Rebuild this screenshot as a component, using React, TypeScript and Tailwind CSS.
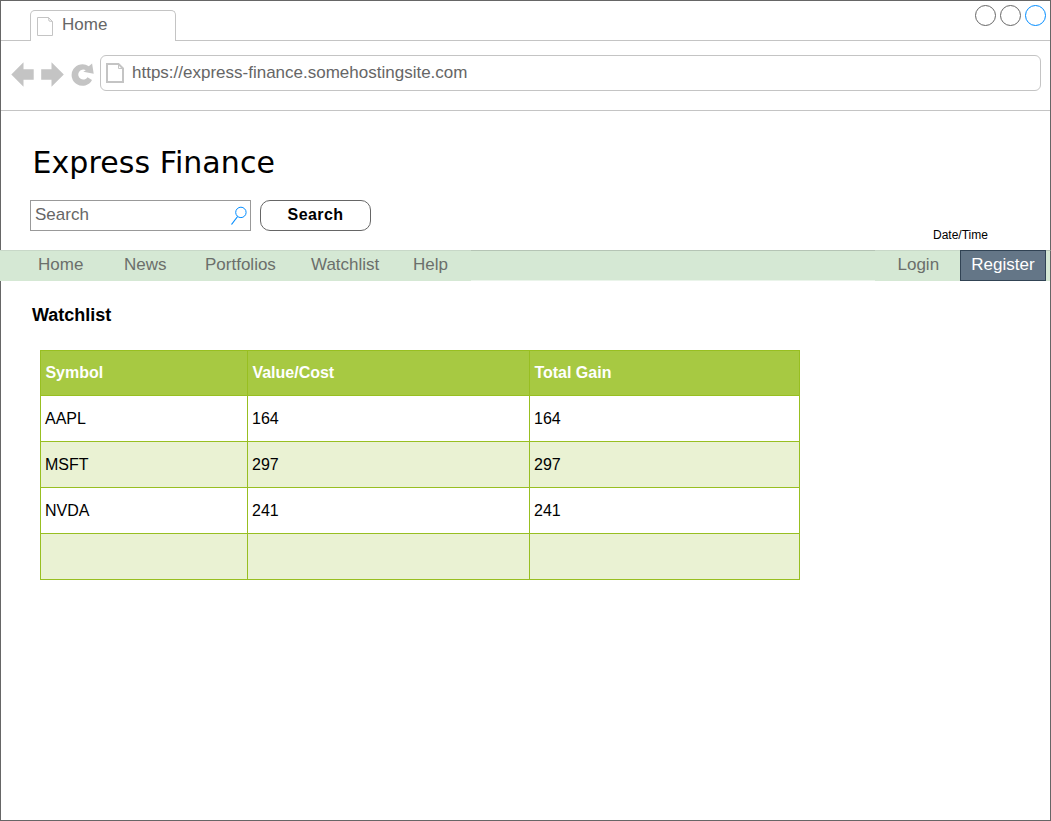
import React from "react";

const rows = [
  ["AAPL", "164", "164"],
  ["MSFT", "297", "297"],
  ["NVDA", "241", "241"],
  ["", "", ""],
];

function PageIcon({ className, thick }: { className: string; thick?: boolean }) {
  return thick ? (
    <svg className={className} viewBox="0 0 18 20" fill="none" stroke="#c4c4c4" strokeWidth="2">
      <path d="M1 1H12.5L17 5.5V19H1Z" />
      <path d="M12.5 1V5.5H17" strokeWidth="1" />
    </svg>
  ) : (
    <svg className={className} viewBox="0 0 16 19" fill="none" stroke="#c4c4c4">
      <path d="M.5 .5H11.5L15.5 4.5V18.5H.5Z" />
      <path d="M11.5 .5L12 4L15.5 4.5" />
    </svg>
  );
}

function TabBar() {
  return (
    <div className="flex h-10 items-end">
      <div className="h-px w-[29px] bg-[#c4c4c4]" />
      <div className="flex h-[31px] w-[146px] rounded-t-[5px] border border-b-0 border-[#c4c4c4] pl-[6px]">
        <PageIcon className="mt-[6px] h-[19px] w-4" />
        <span className="ml-[9px] mt-[4px] text-[17px] leading-5 text-[#666]">Home</span>
      </div>
      <div className="flex h-10 flex-1 justify-end gap-1 border-b border-[#c4c4c4] pr-1 pt-1">
        <div className="size-[21px] rounded-full border border-[#666]" />
        <div className="size-[21px] rounded-full border border-[#666]" />
        <div className="size-[21px] rounded-full border border-[#008cff]" />
      </div>
    </div>
  );
}

function AddressBar() {
  return (
    <div className="flex h-[70px] border-b border-[#c4c4c4] pt-[14px]">
      <svg className="ml-[10px] mt-[6px] h-[27px] w-[83px] shrink-0" viewBox="11 61 83 27" fill="#c4c4c4">
        <path d="M11.3 74.5L23.5 62.3V69.3H33.7V79.7H23.5V86.7Z" />
        <path d="M63.8 74.5L51.5 62.3V69.3H41.2V79.7H51.5V86.7Z" />
        <path d="M88.8 66.3L92.1 63.4L93.7 73.8L83.3 71.8L85.8 70.2A5 5 0 1 0 87.5 77.2L92 80A10.8 10.8 0 1 1 88.8 66.3Z" />
      </svg>
      <div className="ml-[6px] flex h-9 w-[941px] rounded-[6px] border border-[#c4c4c4] pl-[5px]">
        <PageIcon thick className="mt-[7px] h-5 w-[18px]" />
        <span className="ml-[8px] mt-[7px] text-[17px] leading-5 text-[#666]">
          https://express-finance.somehostingsite.com
        </span>
      </div>
    </div>
  );
}

function SearchRow() {
  return (
    <div className="mt-[18px] flex pl-[29px]">
      <div className="flex h-[31px] w-[221px] justify-between border border-[#999] pl-[4px] pr-[3px]">
        <span className="mt-[4px] text-[17px] leading-5 text-[#666]">Search</span>
        <svg className="mt-[5px] h-5 w-4" viewBox="0 0 16 20" fill="none" stroke="#008cff">
          <circle cx="9.9" cy="6.4" r="5.2" />
          <path d="M6.6 10.5L.5 18.5" strokeWidth="1.2" />
        </svg>
      </div>
      <button className="ml-[9px] flex h-[31px] w-[111px] justify-center rounded-[10px] border border-[#666] pt-[4px] text-[16px] font-bold leading-5 tracking-[0.4px] text-black">
        Search
      </button>
    </div>
  );
}

function Nav() {
  return (
    <nav className="-mx-px mt-[7px] flex h-[31px] text-[17px] leading-5 text-[#6b6f6b]">
      <div className="flex w-[471px] border-t border-[#c8d8c8] bg-[#d5e8d4] pl-[38px] pt-[4px]">
        <span className="w-[86px]">Home</span>
        <span className="w-[81px]">News</span>
        <span className="w-[106px]">Portfolios</span>
        <span className="w-[102px]">Watchlist</span>
        <span>Help</span>
      </div>
      <div className="h-[31px] w-[404px] border-y border-b-[#eaf4ea] border-t-[#b5c4b5] bg-[#d5e8d4]" />
      <div className="flex w-[85px] border-t border-[#c8d8c8] bg-[#d5e8d4] pl-[22.5px] pt-[4px]">Login</div>
      <div className="h-[31px] w-[86px] border border-[#314354] bg-[#647687] pt-[4px] text-center text-white">
        Register
      </div>
      <div className="h-[31px] w-[5px] border-r border-t border-r-[#666] border-t-[#b5c4b5] bg-[#d5e8d4]" />
    </nav>
  );
}

function Watchlist() {
  return (
    <table className="ml-[39px] mt-[25px] w-[760px] table-fixed border-collapse text-left text-[16px] leading-5 text-black">
      <colgroup>
        <col className="w-[207px]" />
        <col className="w-[282px]" />
        <col className="w-[270px]" />
      </colgroup>
      <thead>
        <tr className="h-[45px] bg-[#a7c942] text-white">
          {["Symbol", "Value/Cost", "Total Gain"].map((h) => (
            <th key={h} className="border border-[#98bf21] p-0 pl-[4.4px] font-bold">{h}</th>
          ))}
        </tr>
      </thead>
      <tbody>
        {rows.map((row, i) => (
          <tr key={i} className="h-[46px] even:bg-[#eaf2d3]">
            {row.map((cell, j) => (
              <td key={j} className="border border-[#98bf21] p-0 pl-[4px]">{cell}</td>
            ))}
          </tr>
        ))}
      </tbody>
    </table>
  );
}

export default function App() {
  return (
    <div className="flex h-[821px] w-[1051px] flex-col border border-[#666] bg-white font-['Liberation_Sans',Arial,sans-serif]">
      <TabBar />
      <AddressBar />
      <h1 className="ml-[31.5px] mt-[33px] h-[38px] font-['DejaVu_Sans',Verdana,sans-serif] text-[30px] leading-[38px] tracking-[0.07px] text-black">
        Express Finance
      </h1>
      <SearchRow />
      <div className="-mt-[4px] ml-[932px] text-[12px] leading-4 text-black">Date/Time</div>
      <Nav />
      <h2 className="ml-[31px] mt-[24px] text-[18px] font-bold leading-5 text-black">Watchlist</h2>
      <Watchlist />
    </div>
  );
}
